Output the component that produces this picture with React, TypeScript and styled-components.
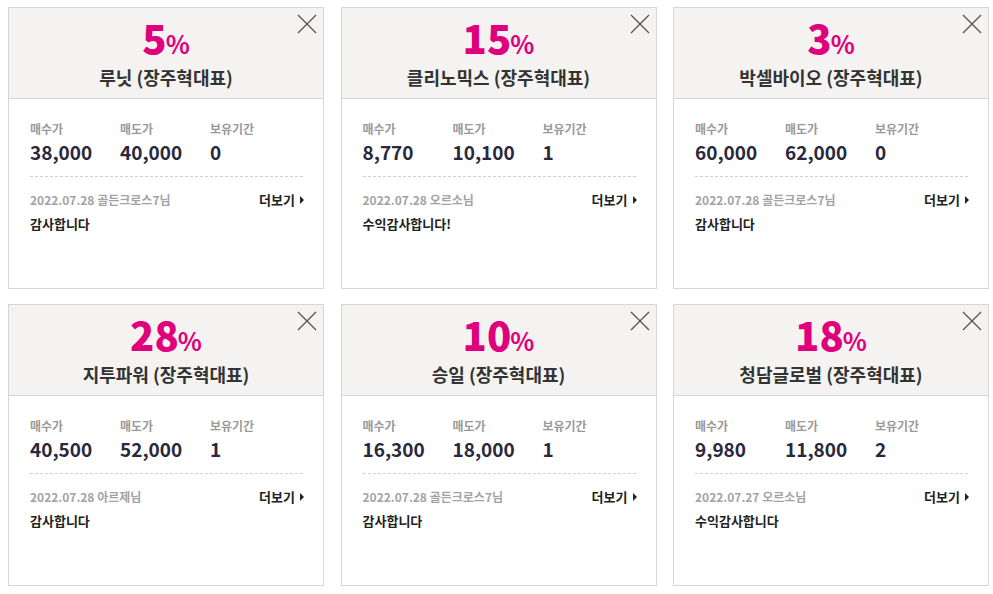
import React from "react";
import styled, { createGlobalStyle } from "styled-components";

const Global = createGlobalStyle`
  html, body { margin: 0; padding: 0; background: #fff; }
  body { font-family: "Noto Sans CJK KR", "Noto Sans", sans-serif; }
  * { box-sizing: border-box; }
`;

type Item = {
  pct: string;
  name: string;
  buy: string;
  sell: string;
  hold: string;
  date: string;
  user: string;
  msg: string;
};

const items: Item[] = [
  { pct: "5", name: "루닛", buy: "38,000", sell: "40,000", hold: "0", date: "2022.07.28", user: "골든크로스7님", msg: "감사합니다" },
  { pct: "15", name: "클리노믹스", buy: "8,770", sell: "10,100", hold: "1", date: "2022.07.28", user: "오르소님", msg: "수익감사합니다!" },
  { pct: "3", name: "박셀바이오", buy: "60,000", sell: "62,000", hold: "0", date: "2022.07.28", user: "골든크로스7님", msg: "감사합니다" },
  { pct: "28", name: "지투파워", buy: "40,500", sell: "52,000", hold: "1", date: "2022.07.28", user: "아르제님", msg: "감사합니다" },
  { pct: "10", name: "승일", buy: "16,300", sell: "18,000", hold: "1", date: "2022.07.28", user: "골든크로스7님", msg: "감사합니다" },
  { pct: "18", name: "청담글로벌", buy: "9,980", sell: "11,800", hold: "2", date: "2022.07.27", user: "오르소님", msg: "수익감사합니다" },
];

const Grid = styled.div`
  display: grid;
  grid-template-columns: repeat(3, 316px);
  grid-auto-rows: 282px;
  column-gap: 16.5px;
  row-gap: 15px;
  padding: 7px 0 0 8px;
`;

const Card = styled.div`
  position: relative;
  border: 1px solid #d6d6d6;
  background: #fff;
  display: flex;
  flex-direction: column;
`;

const Head = styled.div`
  height: 91px;
  background: #f4f3f1;
  border-bottom: 1px solid #d6d6d6;
  display: flex;
  flex-direction: column;
  align-items: center;
  padding-top: 6px;
`;

const Pct = styled.div`
  color: #e0007c;
  font-weight: 900;
  font-size: 40px;
  line-height: 46px;
  display: flex;
  align-items: baseline;
  span {
    font-size: 25px;
    font-weight: 700;
    margin-left: -1px;
  }
`;

const Title = styled.div`
  color: #333;
  font-size: 18px;
  font-weight: 700;
  line-height: 24px;
  margin-top: -1px;
`;

const Close = styled.button`
  position: absolute;
  top: 6px;
  right: 6px;
  width: 20px;
  height: 20px;
  border: 0;
  padding: 0;
  background: transparent;
  cursor: pointer;
  display: flex;
  svg { display: block; }
`;

const Body = styled.div`
  padding: 21px 20px 0 21px;
`;

const Stats = styled.div`
  display: grid;
  grid-template-columns: 90px 90px 1fr;
  padding-bottom: 11px;
  border-bottom: 1px dashed #cfcfcf;
`;

const Stat = styled.div`
  display: flex;
  flex-direction: column;
`;

const Label = styled.div`
  color: #9a9a9a;
  font-size: 12px;
  font-weight: 700;
  line-height: 17px;
`;

const Value = styled.div`
  color: #29283d;
  font-size: 19px;
  font-weight: 700;
  line-height: 26px;
  margin-top: 2px;
`;

const MetaRow = styled.div`
  display: flex;
  justify-content: space-between;
  align-items: center;
  margin-top: 14px;
`;

const Meta = styled.div`
  color: #a3a3a3;
  font-size: 12px;
  font-weight: 700;
  line-height: 18px;
`;

const More = styled.a`
  color: #222;
  font-size: 13px;
  font-weight: 700;
  line-height: 18px;
  display: flex;
  align-items: center;
  gap: 5px;
  text-decoration: none;
  margin-right: -1px;
`;

const Tri = styled.span`
  width: 0;
  height: 0;
  border-top: 4px solid transparent;
  border-bottom: 4px solid transparent;
  border-left: 4px solid #222;
`;

const Msg = styled.div`
  color: #222;
  font-size: 13px;
  font-weight: 700;
  line-height: 18px;
  margin-top: 6px;
`;

function XIcon() {
  return (
    <svg width="20" height="20" viewBox="0 0 20 20">
      <path d="M1 1 L19 19 M19 1 L1 19" stroke="#555" strokeWidth="1.3" fill="none" />
    </svg>
  );
}

function CardView({ it }: { it: Item }) {
  return (
    <Card>
      <Head>
        <Pct>
          {it.pct}
          <span>%</span>
        </Pct>
        <Title>{it.name} (장주혁대표)</Title>
      </Head>
      <Close aria-label="close">
        <XIcon />
      </Close>
      <Body>
        <Stats>
          <Stat>
            <Label>매수가</Label>
            <Value>{it.buy}</Value>
          </Stat>
          <Stat>
            <Label>매도가</Label>
            <Value>{it.sell}</Value>
          </Stat>
          <Stat>
            <Label>보유기간</Label>
            <Value>{it.hold}</Value>
          </Stat>
        </Stats>
        <MetaRow>
          <Meta>
            {it.date} {it.user}
          </Meta>
          <More href="#">
            더보기 <Tri />
          </More>
        </MetaRow>
        <Msg>{it.msg}</Msg>
      </Body>
    </Card>
  );
}

export default function App() {
  return (
    <>
      <Global />
      <Grid>
        {items.map((it, i) => (
          <CardView key={i} it={it} />
        ))}
      </Grid>
    </>
  );
}
